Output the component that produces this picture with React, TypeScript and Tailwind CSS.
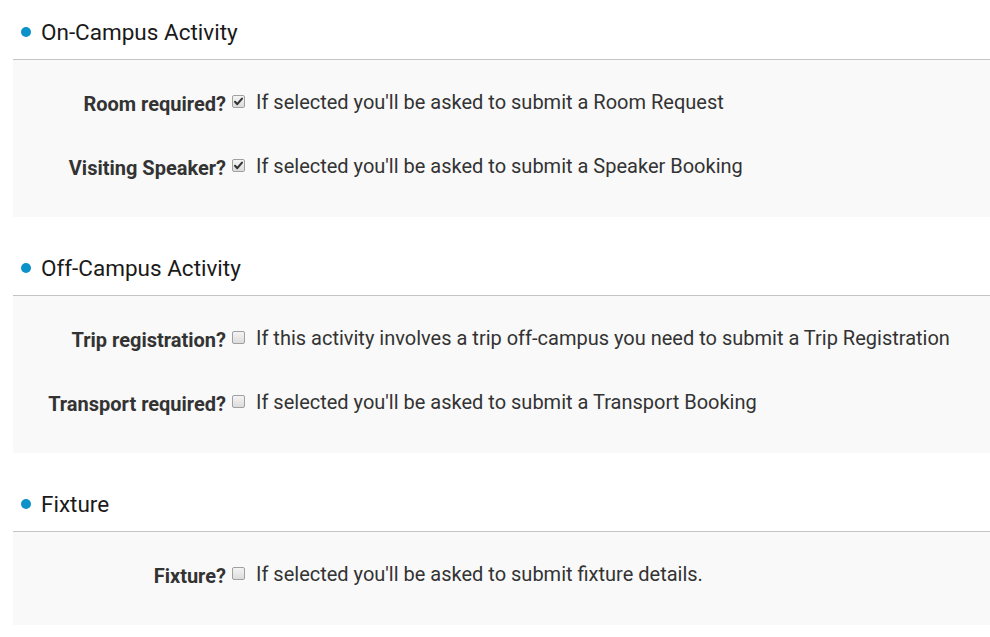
import React from "react";

type Row = { label: string; checked: boolean; desc: string };
type Section = { title: string; rows: Row[] };

const sections: Section[] = [
  {
    title: "On-Campus Activity",
    rows: [
      { label: "Room required?", checked: true, desc: "If selected you'll be asked to submit a Room Request" },
      { label: "Visiting Speaker?", checked: true, desc: "If selected you'll be asked to submit a Speaker Booking" },
    ],
  },
  {
    title: "Off-Campus Activity",
    rows: [
      { label: "Trip registration?", checked: false, desc: "If this activity involves a trip off-campus you need to submit a Trip Registration" },
      { label: "Transport required?", checked: false, desc: "If selected you'll be asked to submit a Transport Booking" },
    ],
  },
  {
    title: "Fixture",
    rows: [{ label: "Fixture?", checked: false, desc: "If selected you'll be asked to submit fixture details." }],
  },
];

function Box({ checked }: { checked: boolean }) {
  return (
    <span className="relative inline-block w-[13px] h-[13px] rounded-[2px] border border-[#a0a0a0] bg-gradient-to-b from-[#f4f4f4] to-[#dcdcdc] shrink-0">
      {checked && (
        <svg viewBox="0 0 13 13" className="absolute -left-px -top-px w-[13px] h-[13px]">
          <path d="M3 6.8 L5.3 9.2 L10 3.6" fill="none" stroke="#333" strokeWidth="2" strokeLinecap="round" strokeLinejoin="round" />
        </svg>
      )}
    </span>
  );
}

export default function App() {
  return (
    <div className="w-[990px] bg-white text-[#333]" style={{ fontFamily: "Roboto, 'Liberation Sans', sans-serif" }}>
      {sections.map((s, i) => (
        <div key={i} className={i === 0 ? "" : "pt-[19px]"}>
          <div className="flex items-center h-[60px] pt-[5px] pl-[8px] border-b border-[#c4c4c4] ml-[13px]">
            <span className="w-[10px] h-[10px] rounded-full bg-[#0a92c9] mr-[10px]" />
            <span className="text-[22.5px] text-[#1a1a1a] leading-none">{s.title}</span>
          </div>
          <div className="ml-[13px] bg-[#f9f9f9] pt-[31px] pb-[40px] flex flex-col gap-[42px]">
            {s.rows.map((r, j) => (
              <div key={j} className="flex items-center h-[22px]">
                <span className="w-[213px] text-right font-bold text-[20px] text-[#333] leading-none translate-y-[2px]">{r.label}</span>
                <span className="ml-[6px] -translate-y-[1px] flex"><Box checked={r.checked} /></span>
                <span className="ml-[11px] text-[20px] text-[#333] leading-none">{r.desc}</span>
              </div>
            ))}
          </div>
        </div>
      ))}
    </div>
  );
}
